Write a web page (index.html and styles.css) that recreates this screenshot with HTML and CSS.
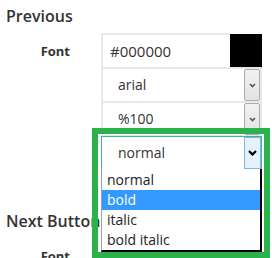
FILE: index.html
```html
<!DOCTYPE html>
<html lang="en">
<head>
<meta charset="utf-8">
<title>Button styles</title>
<link rel="stylesheet" href="styles.css">
</head>
<body>
<section class="group">
  <h2 class="group-title">Previous</h2>
  <div class="field">
    <div class="field-label">Font</div>
    <div class="field-controls">
      <div class="color-input"><span class="color-value">#000000</span><span class="swatch"></span></div>
      <div class="select"><span class="select-value">arial</span><span class="select-btn"><svg width="7" height="5" viewBox="0 0 7 5"><path d="M1 1 L3.5 3.5 L6 1" fill="none" stroke="#555" stroke-width="1.6"/></svg></span></div>
      <div class="select"><span class="select-value">%100</span><span class="select-btn"><svg width="7" height="5" viewBox="0 0 7 5"><path d="M1 1 L3.5 3.5 L6 1" fill="none" stroke="#555" stroke-width="1.6"/></svg></span></div>
      <div class="select select-open">
        <span class="select-value">normal</span>
        <span class="select-btn select-btn-focus"><svg width="9" height="6" viewBox="0 0 9 6"><path d="M1 1 L4.5 4.5 L8 1" fill="none" stroke="#000" stroke-width="2.2"/></svg></span>
        <ul class="listbox">
          <li class="option">normal</li>
          <li class="option option-selected">bold</li>
          <li class="option">italic</li>
          <li class="option">bold italic</li>
        </ul>
      </div>
    </div>
  </div>
</section>
<section class="group group-next">
  <h2 class="group-title">Next Button</h2>
  <div class="field">
    <div class="field-label">Font</div>
    <div class="field-controls">
      <div class="color-input"><span class="color-value">#000000</span><span class="swatch"></span></div>
      <div class="select"><span class="select-value">arial</span><span class="select-btn"><svg width="7" height="5" viewBox="0 0 7 5"><path d="M1 1 L3.5 3.5 L6 1" fill="none" stroke="#555" stroke-width="1.6"/></svg></span></div>
    </div>
  </div>
</section>
<div class="annotation"></div>
</body>
</html>
```

FILE: styles.css
```css
html, body {
  overflow: hidden;
}
body {
  margin: 0;
  padding: 5px 0 0 6px;
  font-family: "Open Sans", "DejaVu Sans", sans-serif;
  color: #333;
  background: #fff;
  position: relative;
  height: 253px;
}
.group-title {
  margin: 0 0 6px 0;
  font-size: 16px;
  line-height: 22px;
  font-weight: 600;
  color: #333;
}
.group-next {
  margin-top: 40px;
}
.field {
  display: grid;
  grid-template-columns: 64px 161px;
  column-gap: 31px;
}
.field-label {
  text-align: right;
  font-size: 13px;
  font-weight: 700;
  line-height: 36px;
  color: #333;
}
.field-controls {
  display: flex;
  flex-direction: column;
}
.color-input {
  display: flex;
  height: 36px;
}
.color-value {
  flex: 1;
  border: 2px solid #e8e8e8;
  border-right: none;
  padding-left: 7px;
  font-size: 15px;
  line-height: 32px;
  color: #333;
}
.swatch {
  width: 32px;
  height: 34px;
  margin-top: 1px;
  background: #000;
}
.select {
  position: relative;
  display: flex;
  height: 36px;
  margin-top: -2px;
  border: 2px solid #e8e8e8;
  box-sizing: border-box;
}
.select-value {
  flex: 1;
  padding-left: 15px;
  font-size: 14px;
  line-height: 32px;
  color: #333;
}
.select-btn {
  width: 16px;
  box-sizing: border-box;
  border: 1px solid #adadad;
  border-radius: 2px;
  background: linear-gradient(#f2f2f2, #e3e3e3);
  display: flex;
  align-items: center;
  justify-content: center;
}
.select-open {
  height: 34px;
  margin-top: -1px;
  border: 1px solid #3fb39c;
}
.select-open .select-value {
  padding-left: 16px;
}
.select-btn-focus {
  width: 17px;
  border-color: #7eb4ea;
  background: #e5f1fb;
  border-radius: 0;
}
.listbox {
  position: absolute;
  top: 100%;
  left: -1px;
  width: 161px;
  box-sizing: border-box;
  margin: 0;
  padding: 1px 0 0 0;
  list-style: none;
  background: #fff;
  border-left: 1px solid #a0a0a0;
  border-right: 2px solid #000;
  border-bottom: 2px solid #000;
  z-index: 2;
}
.option {
  height: 20px;
  padding-left: 5px;
  font-size: 14px;
  line-height: 20px;
  color: #222;
}
.option-selected {
  background: #3399ff;
  color: #fff;
}
.annotation {
  position: absolute;
  left: 92px;
  top: 128px;
  width: 178px;
  height: 130px;
  box-sizing: border-box;
  border: 6px solid #2bb24c;
  z-index: 3;
  pointer-events: none;
}
```
